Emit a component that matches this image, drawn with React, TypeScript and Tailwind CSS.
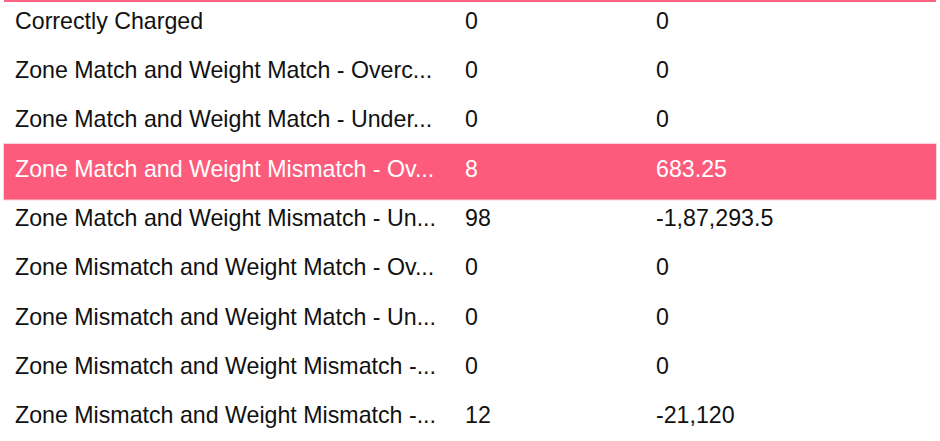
import React from 'react';

interface ChargeRow {
  label: string;
  count: string;
  amount: string;
}

const rows: ChargeRow[] = [
  { label: 'Correctly Charged', count: '0', amount: '0' },
  { label: 'Zone Match and Weight Match - Overc...', count: '0', amount: '0' },
  { label: 'Zone Match and Weight Match - Under...', count: '0', amount: '0' },
  { label: 'Zone Match and Weight Mismatch - Ov...', count: '8', amount: '683.25' },
  { label: 'Zone Match and Weight Mismatch - Un...', count: '98', amount: '-1,87,293.5' },
  { label: 'Zone Mismatch and Weight Match - Ov...', count: '0', amount: '0' },
  { label: 'Zone Mismatch and Weight Match - Un...', count: '0', amount: '0' },
  { label: 'Zone Mismatch and Weight Mismatch -...', count: '0', amount: '0' },
  { label: 'Zone Mismatch and Weight Mismatch -...', count: '12', amount: '-21,120' },
];

const selectedIndex = 3;

export default function App() {
  return (
    <div className="h-[441px] w-[940px] overflow-hidden bg-white font-['Liberation_Sans',Arial,sans-serif] text-[23.2px] text-[#111]">
      <div className="relative z-10 mx-[4px] h-[2px] bg-[#fd6283]" />
      <div className="-mt-[5.5px] px-[4px]">
        {rows.map((row, i) => {
          const selected = i === selectedIndex;
          return (
            <div
              key={i}
              className={`flex h-[49.33px] items-center ${
                selected
                  ? 'bg-[#fd5b7b] text-white shadow-[0_5.5px_0_0_#fd5b7b,0_0_0_1px_#fcd3dc,0_5.5px_0_1px_#fcd3dc]'
                  : ''
              }`}
            >
              <div className="w-[450px] truncate whitespace-nowrap pl-[11px]">{row.label}</div>
              <div className="w-[191px] pl-[11px]">{row.count}</div>
              <div className="flex-1 pl-[11px]">{row.amount}</div>
            </div>
          );
        })}
      </div>
    </div>
  );
}
